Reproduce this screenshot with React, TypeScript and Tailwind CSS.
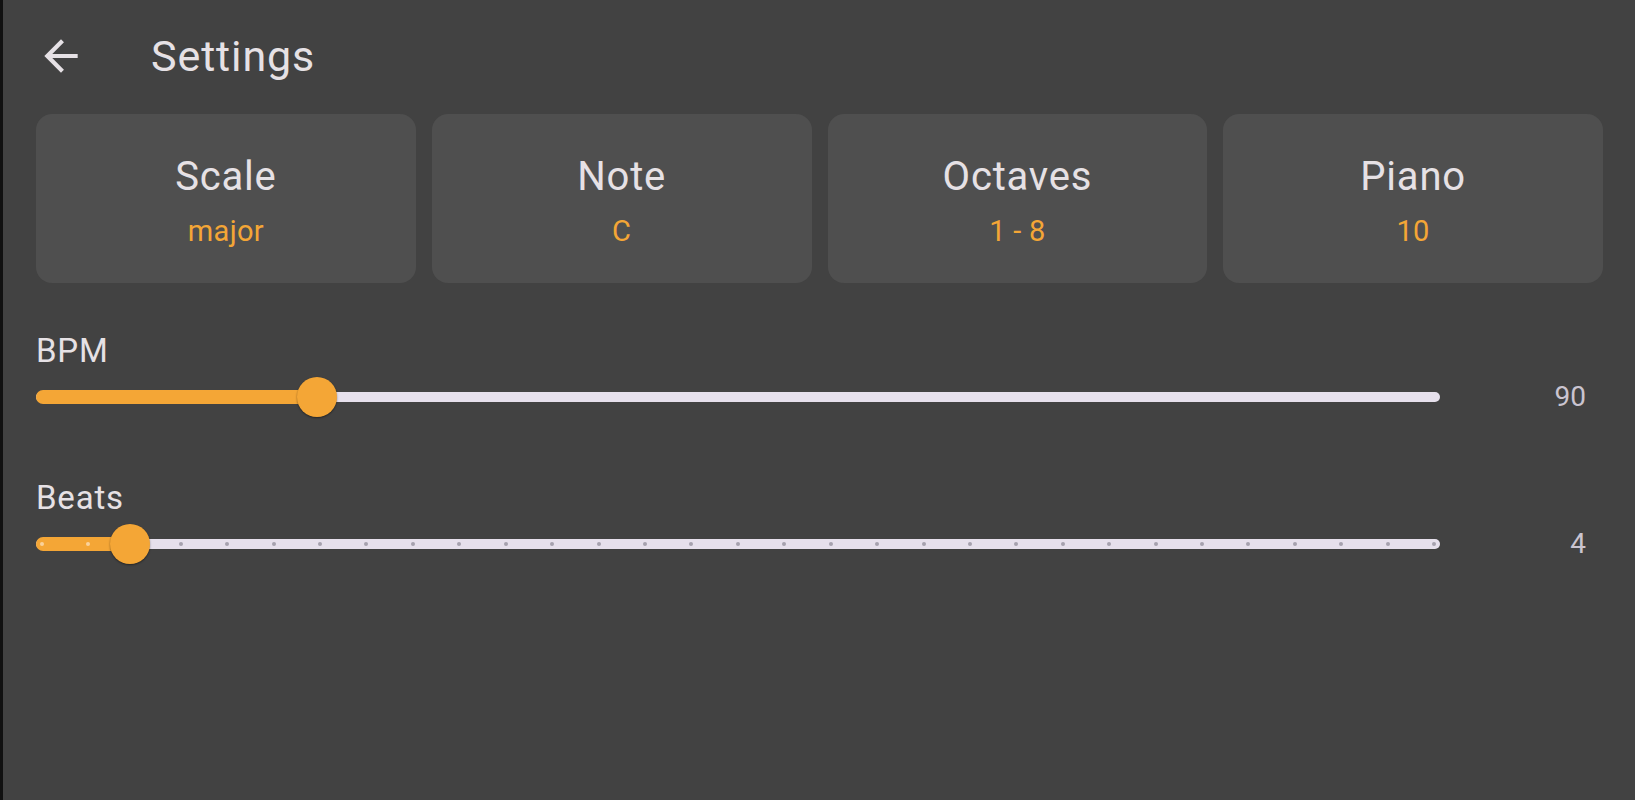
import React from "react"

const cards = [
  { label: "Scale", value: "major" },
  { label: "Note", value: "C" },
  { label: "Octaves", value: "1 - 8" },
  { label: "Piano", value: "10" },
]

function ArrowBack() {
  return (
    <svg viewBox="0 0 24 24" className="w-[50px] h-[50px]" fill="#e6e1e5">
      <path d="M20 11H7.83l5.59-5.59L12 4l-8 8 8 8 1.41-1.41L7.83 13H20v-2z" />
    </svg>
  )
}

interface SliderRowProps {
  label: string
  value: number
  min: number
  max: number
  divisions?: number
}

function SliderRow({ label, value, min, max, divisions }: SliderRowProps) {
  const pct = ((value - min) / (max - min)) * 100
  const ticks = divisions ? Array.from({ length: divisions + 1 }, (_, i) => i) : []
  const activeIndex = divisions ? Math.round(((value - min) / (max - min)) * divisions) : 0

  return (
    <div className="flex flex-col">
      <div className="h-[40px] text-[33px] leading-[40px] text-[#e6e1e5] tracking-[0.8px]">{label}</div>
      <div className="flex items-center h-[51px]">
        <div className="relative flex-1 h-full flex items-center">
          {/* inactive track */}
          <div className="relative w-full h-[10px] rounded-full bg-[#e6e0ec]" />
          {/* active track */}
          <div
            className="absolute left-0 top-1/2 -translate-y-1/2 h-[14px] rounded-l-full bg-[#f4a636]"
            style={{ width: `${pct}%` }}
          />
          {/* tick marks */}
          {divisions && (
            <div className="absolute left-[3.5px] right-[3.5px] top-1/2 -translate-y-1/2 h-[4px] flex justify-between">
              {ticks.map((i) => (
                <span
                  key={i}
                  className={
                    i < activeIndex
                      ? "w-[4px] h-[4px] rounded-full bg-[#f9d29c]"
                      : "w-[4px] h-[4px] rounded-full bg-[#a6a1ae]"
                  }
                />
              ))}
            </div>
          )}
          {/* thumb */}
          <div
            className="absolute top-1/2 -translate-y-1/2 -translate-x-1/2 w-[40px] h-[40px] rounded-full bg-[#f4a636] shadow-[0_1px_2px_rgba(0,0,0,0.45)]"
            style={{ left: `${pct}%` }}
          />
        </div>
        <div className="w-[163px] pr-[17px] text-right text-[28px] leading-[36px] text-[#cac4d0]">
          {value}
        </div>
      </div>
    </div>
  )
}

export default function App() {
  return (
    <div
      className="flex w-full h-[800px] bg-[#424242]"
      style={{ fontFamily: "Roboto, 'Noto Sans', sans-serif" }}
    >
      <div className="w-[3px] h-full bg-[#111111]" />
      <div className="flex-1 pl-[33px] pr-[32px]">
        {/* Header */}
        <div className="flex items-center h-[112px]">
          <button className="w-[50px] h-[50px] flex items-center justify-center">
            <ArrowBack />
          </button>
          <h1 className="ml-[65px] text-[43px] leading-[50px] text-[#e6e1e5] tracking-[0.9px]">Settings</h1>
        </div>

        {/* Cards */}
        <div className="mt-[2px] grid grid-cols-4 gap-[16px]">
          {cards.map((c) => (
            <div key={c.label} className="h-[169px] rounded-[16px] bg-[#4f4f4f] flex flex-col items-center pt-[41px]">
              <div className="h-[44px] text-[40px] leading-[44px] text-[#e6e1e5] tracking-[0.8px]">{c.label}</div>
              <div className="mt-[14px] h-[36px] text-[29px] leading-[36px] text-[#f4a636] tracking-[0.3px]">{c.value}</div>
            </div>
          ))}
        </div>

        {/* Sliders */}
        <div className="mt-[48px] flex flex-col gap-[56px]">
          <SliderRow label="BPM" value={90} min={30} max={330} />
          <SliderRow label="Beats" value={4} min={2} max={32} divisions={30} />
        </div>
      </div>
    </div>
  )
}
